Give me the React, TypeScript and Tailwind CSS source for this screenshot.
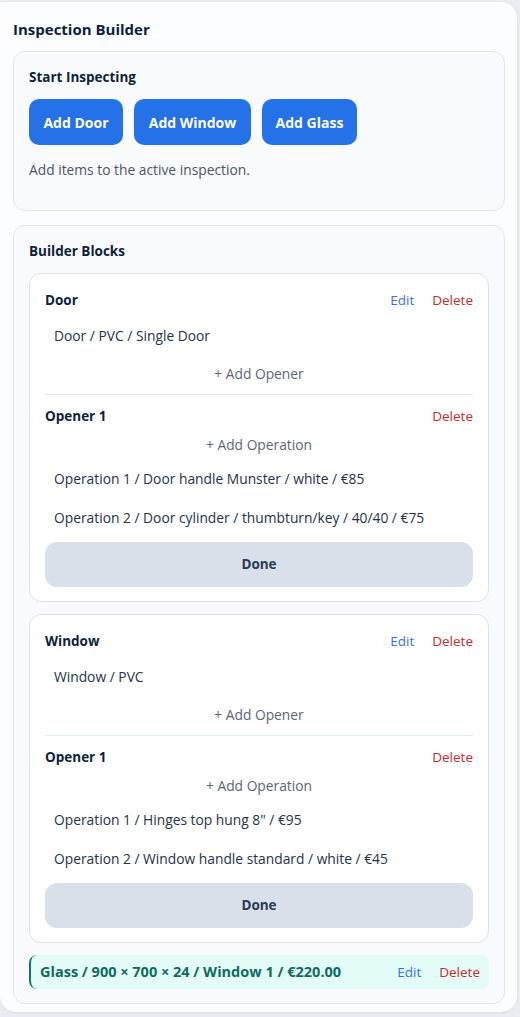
import React from "react";

type Block = {
  title: string;
  detail: string;
  operations: string[];
};

const blocks: Block[] = [
  {
    title: "Door",
    detail: "Door / PVC / Single Door",
    operations: [
      "Operation 1 / Door handle Munster / white / €85",
      "Operation 2 / Door cylinder / thumbturn/key / 40/40 / €75",
    ],
  },
  {
    title: "Window",
    detail: "Window / PVC",
    operations: [
      "Operation 1 / Hinges top hung 8\" / €95",
      "Operation 2 / Window handle standard / white / €45",
    ],
  },
];

const startButtons = [
  { label: "Add Door", width: "w-[94px]" },
  { label: "Add Window", width: "w-[117px]" },
  { label: "Add Glass", width: "w-[95px]" },
];

function BlockCard({ block }: { block: Block }) {
  return (
    <div className="bg-white border border-[#dbe3ee] rounded-xl px-[15px] pt-[16px] pb-[14px]">
      <div className="flex items-center h-5">
        <span className="text-[13.5px] font-bold text-[#0f1f3a]">{block.title}</span>
        <div className="ml-auto flex items-center gap-[18px] text-[13.5px]">
          <button className="text-[#3b6fe0]">Edit</button>
          <button className="text-[#c62a2a]">Delete</button>
        </div>
      </div>
      <div className="mt-[7px] h-[38px] flex items-center px-[9px] text-[13.8px] text-[#24324a]">{block.detail}</div>
      <button className="w-full h-[39px] flex items-center justify-center text-[13.8px] text-[#5b6577]">+ Add Opener</button>
      <div className="border-t border-[#dbeafe] pt-[11px]">
        <div className="flex items-center h-5">
          <span className="text-[13.5px] font-bold text-[#0f1f3a]">Opener 1</span>
          <button className="ml-auto text-[13.5px] text-[#c62a2a]">Delete</button>
        </div>
        <button className="mt-[4px] w-full h-[30px] flex items-center justify-center text-[13.8px] text-[#5b6577]">+ Add Operation</button>
        <div className="flex flex-col gap-px">
          {block.operations.map((op) => (
            <div key={op} className="h-[38px] flex items-center px-[9px] text-[13.8px] text-[#24324a] whitespace-nowrap">
              {op}
            </div>
          ))}
        </div>
        <button className="mt-[5px] w-full h-[45px] rounded-xl bg-[#d9e0ea] text-[13.5px] font-bold text-[#2a3a55]">Done</button>
      </div>
    </div>
  );
}

export default function App() {
  return (
    <div className="min-h-screen bg-[#e9edf2] pt-[2px] pr-[3px] pb-[5px] font-['Open_Sans','Noto_Sans',sans-serif]">
      <div className="bg-[#fcfdfe] rounded-r-2xl rounded-bl-2xl shadow-[0_1px_3px_rgba(15,23,42,0.06)] pl-[13px] pr-[12px] pt-[17px] pb-[8px]">
        <h1 className="text-[15px] font-bold text-[#0f1f3a] leading-5">Inspection Builder</h1>

        <section className="mt-[12px] bg-[#f8fafe] border border-[#e1e7ef] rounded-xl px-[15px] pt-[15px] pb-[30px]">
          <h2 className="text-[13.5px] font-bold text-[#0f1f3a] leading-5">Start Inspecting</h2>
          <div className="mt-[12px] flex gap-[11px]">
            {startButtons.map((b) => (
              <button
                key={b.label}
                className={`${b.width} h-[46px] rounded-[10px] bg-[#2571e8] text-white text-[14px] font-bold`}
              >
                {b.label}
              </button>
            ))}
          </div>
          <p className="mt-[15px] leading-5 text-[13.8px] text-[#4b5566]">Add items to the active inspection.</p>
        </section>

        <section className="mt-[14px] bg-[#f8fafe] border border-[#e1e7ef] rounded-xl px-[15px] pt-[15px] pb-[14px]">
          <h2 className="text-[13.5px] font-bold text-[#0f1f3a] leading-5">Builder Blocks</h2>
          <div className="mt-[12px] flex flex-col gap-[12px]">
            {blocks.map((b) => (
              <BlockCard key={b.title} block={b} />
            ))}
            <div className="h-[34px] flex items-center bg-[#e3fcf7] border-l-2 border-[#0f766e] rounded-lg pl-[9px] pr-[9px]">
              <span className="text-[14.5px] font-bold text-[#0f6b5f]">Glass / 900 × 700 × 24 / Window 1 / €220.00</span>
              <div className="ml-auto flex items-center gap-[18px] text-[13.5px]">
                <button className="text-[#3b6fe0]">Edit</button>
                <button className="text-[#c62a2a]">Delete</button>
              </div>
            </div>
          </div>
        </section>
      </div>
    </div>
  );
}
